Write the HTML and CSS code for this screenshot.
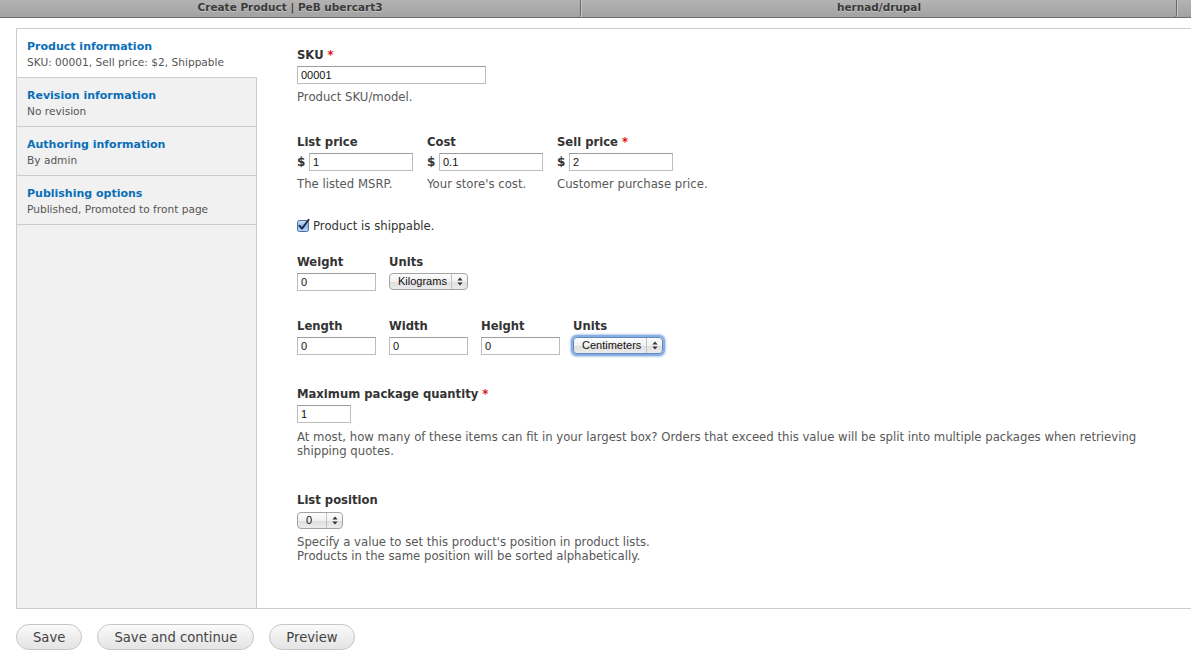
FILE: index.html
```html
<!DOCTYPE html>
<html>
<head>
<meta charset="utf-8">
<title>Create Product | PeB ubercart3</title>
<link rel="stylesheet" href="styles.css">
</head>
<body>
<div class="tabbar">
  <div class="tab tab-first">Create Product | PeB ubercart3</div>
  <div class="tab tab-second">hernad/drupal</div>
  <div class="tab tab-third"></div>
</div>

<div class="page">
  <div class="panel">
    <ul class="vtabs">
      <li class="vtab selected">
        <div class="vtab-title">Product information</div>
        <div class="vtab-summary">SKU: 00001, Sell price: $2, Shippable</div>
      </li>
      <li class="vtab">
        <div class="vtab-title">Revision information</div>
        <div class="vtab-summary">No revision</div>
      </li>
      <li class="vtab">
        <div class="vtab-title">Authoring information</div>
        <div class="vtab-summary">By admin</div>
      </li>
      <li class="vtab">
        <div class="vtab-title">Publishing options</div>
        <div class="vtab-summary">Published, Promoted to front page</div>
      </li>
    </ul>

    <div class="pane">
      <div class="item item-sku">
        <div class="label">SKU <span class="req">*</span></div>
        <div class="input w188">00001</div>
        <div class="desc">Product SKU/model.</div>
      </div>

      <div class="row row-prices">
        <div class="item col130">
          <div class="label">List price</div>
          <div class="money"><span class="cur">$</span><div class="input w104">1</div></div>
          <div class="desc">The listed MSRP.</div>
        </div>
        <div class="item col130">
          <div class="label">Cost</div>
          <div class="money"><span class="cur">$</span><div class="input w104">0.1</div></div>
          <div class="desc">Your store's cost.</div>
        </div>
        <div class="item col130">
          <div class="label">Sell price <span class="req">*</span></div>
          <div class="money"><span class="cur">$</span><div class="input w104">2</div></div>
          <div class="desc">Customer purchase price.</div>
        </div>
      </div>

      <div class="check-row">
        <svg class="checkbox" width="13" height="13" viewBox="0 0 13 13">
          <defs>
            <linearGradient id="cb" x1="0" y1="0" x2="0" y2="1">
              <stop offset="0" stop-color="#cfe3f8"/>
              <stop offset="0.5" stop-color="#8fbbea"/>
              <stop offset="1" stop-color="#b9d8f6"/>
            </linearGradient>
          </defs>
          <rect x="0.5" y="1.5" width="11" height="11" rx="2" fill="url(#cb)" stroke="#4a6f9c"/>
          <path d="M2.6 6.8 L5 9.6 L11.6 0.8" fill="none" stroke="#1c2a44" stroke-width="1.9" stroke-linecap="round" stroke-linejoin="round"/>
        </svg>
        <span class="check-label">Product is shippable.</span>
      </div>

      <div class="row row-weight">
        <div class="item col92">
          <div class="label">Weight</div>
          <div class="input w78">0</div>
        </div>
        <div class="item col92">
          <div class="label">Units</div>
          <div class="select w78">
            <span class="sel-val">Kilograms</span>
            <span class="sel-arrows"><svg width="6" height="9" viewBox="0 0 6 9"><path d="M3 0.5 L5.6 3.6 H0.4 Z M3 8.5 L5.6 5.4 H0.4 Z" fill="#333"/></svg></span>
          </div>
        </div>
      </div>

      <div class="row row-dims">
        <div class="item col92">
          <div class="label">Length</div>
          <div class="input w78">0</div>
        </div>
        <div class="item col92">
          <div class="label">Width</div>
          <div class="input w78">0</div>
        </div>
        <div class="item col92">
          <div class="label">Height</div>
          <div class="input w78">0</div>
        </div>
        <div class="item col92">
          <div class="label">Units</div>
          <div class="select w90 focused">
            <span class="sel-val">Centimeters</span>
            <span class="sel-arrows"><svg width="6" height="9" viewBox="0 0 6 9"><path d="M3 0.5 L5.6 3.6 H0.4 Z M3 8.5 L5.6 5.4 H0.4 Z" fill="#333"/></svg></span>
          </div>
        </div>
      </div>

      <div class="item item-qty">
        <div class="label">Maximum package quantity <span class="req">*</span></div>
        <div class="input w54">1</div>
        <div class="desc desc-multi">At most, how many of these items can fit in your largest box? Orders that exceed this value will be split into multiple packages when retrieving shipping quotes.</div>
      </div>

      <div class="item item-pos">
        <div class="label">List position</div>
        <div class="select w46">
          <span class="sel-val">0</span>
          <span class="sel-arrows"><svg width="6" height="9" viewBox="0 0 6 9"><path d="M3 0.5 L5.6 3.6 H0.4 Z M3 8.5 L5.6 5.4 H0.4 Z" fill="#333"/></svg></span>
        </div>
        <div class="desc desc-multi">Specify a value to set this product's position in product lists.<br>Products in the same position will be sorted alphabetically.</div>
      </div>
    </div>
  </div>

  <div class="actions">
    <button class="btn">Save</button>
    <button class="btn">Save and continue</button>
    <button class="btn">Preview</button>
  </div>
</div>
</body>
</html>
```

FILE: styles.css
```css
html, body {
  margin: 0;
  padding: 0;
  background: #fff;
}
body {
  font-family: "DejaVu Sans", "Noto Sans", sans-serif;
  color: #333;
  overflow: hidden;
  width: 1191px;
  height: 672px;
}

/* browser tab strip */
.tabbar {
  display: flex;
  height: 17px;
  background: linear-gradient(#b3b3b3, #a2a2a2);
  border-bottom: 1px solid #6f6f6f;
  box-sizing: content-box;
}
.tab {
  font-size: 10.5px;
  font-weight: bold;
  color: #3a3a3a;
  text-shadow: 0 1px 0 rgba(255,255,255,0.35);
  line-height: 14px;
  text-align: center;
  border-right: 1px solid #6b6b6b;
  border-bottom-right-radius: 3px;
  box-sizing: border-box;
}
.tab-first { width: 581px; }
.tab-second { width: 596px; border-left: 1px solid #c4c4c4; }
.tab-third { flex: 1; border-right: 0; border-left: 1px solid #c4c4c4; }

/* page */
.page {
  padding: 10px 0 0 16px;
}
.panel {
  display: flex;
  height: 581px;
  width: 1190px;
  border-top: 1px solid #cccccc;
  border-left: 1px solid #cccccc;
  border-bottom: 1px solid #cccccc;
  box-sizing: border-box;
}

.vtabs {
  list-style: none;
  margin: 0;
  padding: 0;
  width: 239px;
  flex: none;
  background: #f1f1f1;
  border-right: 1px solid #cccccc;
}
.vtab {
  border-bottom: 1px solid #cccccc;
  padding: 10px 0 0 10px;
  box-sizing: content-box;
  height: 38px;
}
.vtab.selected {
  background: #fff;
  margin-right: -1px;
}
.vtab-title {
  font-size: 11px;
  font-weight: bold;
  color: #0a6fb8;
  line-height: 16px;
}
.vtab-summary {
  font-size: 10.6px;
  color: #555;
  line-height: 15px;
}

.pane {
  flex: 1;
  padding: 18px 0 0 40px;
  box-sizing: border-box;
}

.label {
  font-size: 11.6px;
  font-weight: bold;
  line-height: 16px;
  color: #333;
  margin-bottom: 3px;
  white-space: nowrap;
}
.req { color: #e2110d; }

.input {
  height: 18px;
  box-sizing: border-box;
  border: 1px solid #bdbdbd;
  border-top-color: #9d9d9d;
  font-family: "Liberation Sans", Arial, sans-serif;
  font-size: 11px;
  line-height: 16px;
  padding-left: 3px;
  color: #111;
  background: #fff;
}
.w188 { width: 189px; }
.w104 { width: 104px; }
.w78 { width: 79px; }
.w54 { width: 54px; }

.desc {
  font-size: 11.7px;
  line-height: 16px;
  color: #585858;
  margin-top: 5px;
  white-space: nowrap;
}
.desc-multi {
  line-height: 14px;
  width: 860px;
  white-space: normal;
}

.item-sku { margin-bottom: 29px; }

.row { display: flex; }
.col130 { width: 130px; }
.col92 { width: 92px; }

.money {
  display: flex;
  align-items: center;
  height: 18px;
}
.cur {
  font-size: 12px;
  font-weight: bold;
  width: 12px;
}

.check-row {
  display: flex;
  align-items: center;
  height: 16px;
  margin-top: 26px;
}
.checkbox { margin-right: 3px; margin-top: -2px; }
.check-label {
  font-size: 11.7px;
  color: #333;
}

.row-weight { margin-top: 20px; }
.row-dims { margin-top: 27px; }
.item-qty { margin-top: 31px; }
.item-qty .desc { margin-top: 7px; }
.item-pos { margin-top: 34px; }
.item-pos .label { margin-bottom: 4px; }
.item-pos .desc { margin-top: 6px; }

/* aqua pop-up */
.select {
  position: relative;
  display: flex;
  height: 17px;
  box-sizing: border-box;
  border: 1px solid #a3a3a3;
  border-radius: 4px;
  background: linear-gradient(#fdfdfd, #f1f1f1 50%, #dedede 51%, #ececec);
  font-family: "Liberation Sans", Arial, sans-serif;
  font-size: 11px;
  line-height: 15px;
  color: #111;
}
.select .sel-val {
  flex: 1;
  padding-left: 8px;
  white-space: nowrap;
}
.select .sel-arrows {
  width: 15px;
  flex: none;
  border-left: 1px solid #c2c2c2;
  display: flex;
  align-items: center;
  justify-content: center;
}
.w46 { width: 46px; }
.w90 { width: 90px; }
.select.w78 { width: 79px; }
.select.focused {
  box-shadow: 0 0 0 2px #86aee0, 0 0 2px 3px #b7cfee;
  border-color: #5f88c2;
}

/* buttons */
.actions {
  display: flex;
  gap: 15px;
  padding-top: 15px;
}
.btn {
  height: 26px;
  padding: 0 16px;
  border: 1px solid #c6c6c6;
  border-radius: 13px;
  background: linear-gradient(#fbfbfb, #ececec 60%, #e4e4e4);
  font-family: "DejaVu Sans", sans-serif;
  font-size: 13.2px;
  color: #444;
}
```
